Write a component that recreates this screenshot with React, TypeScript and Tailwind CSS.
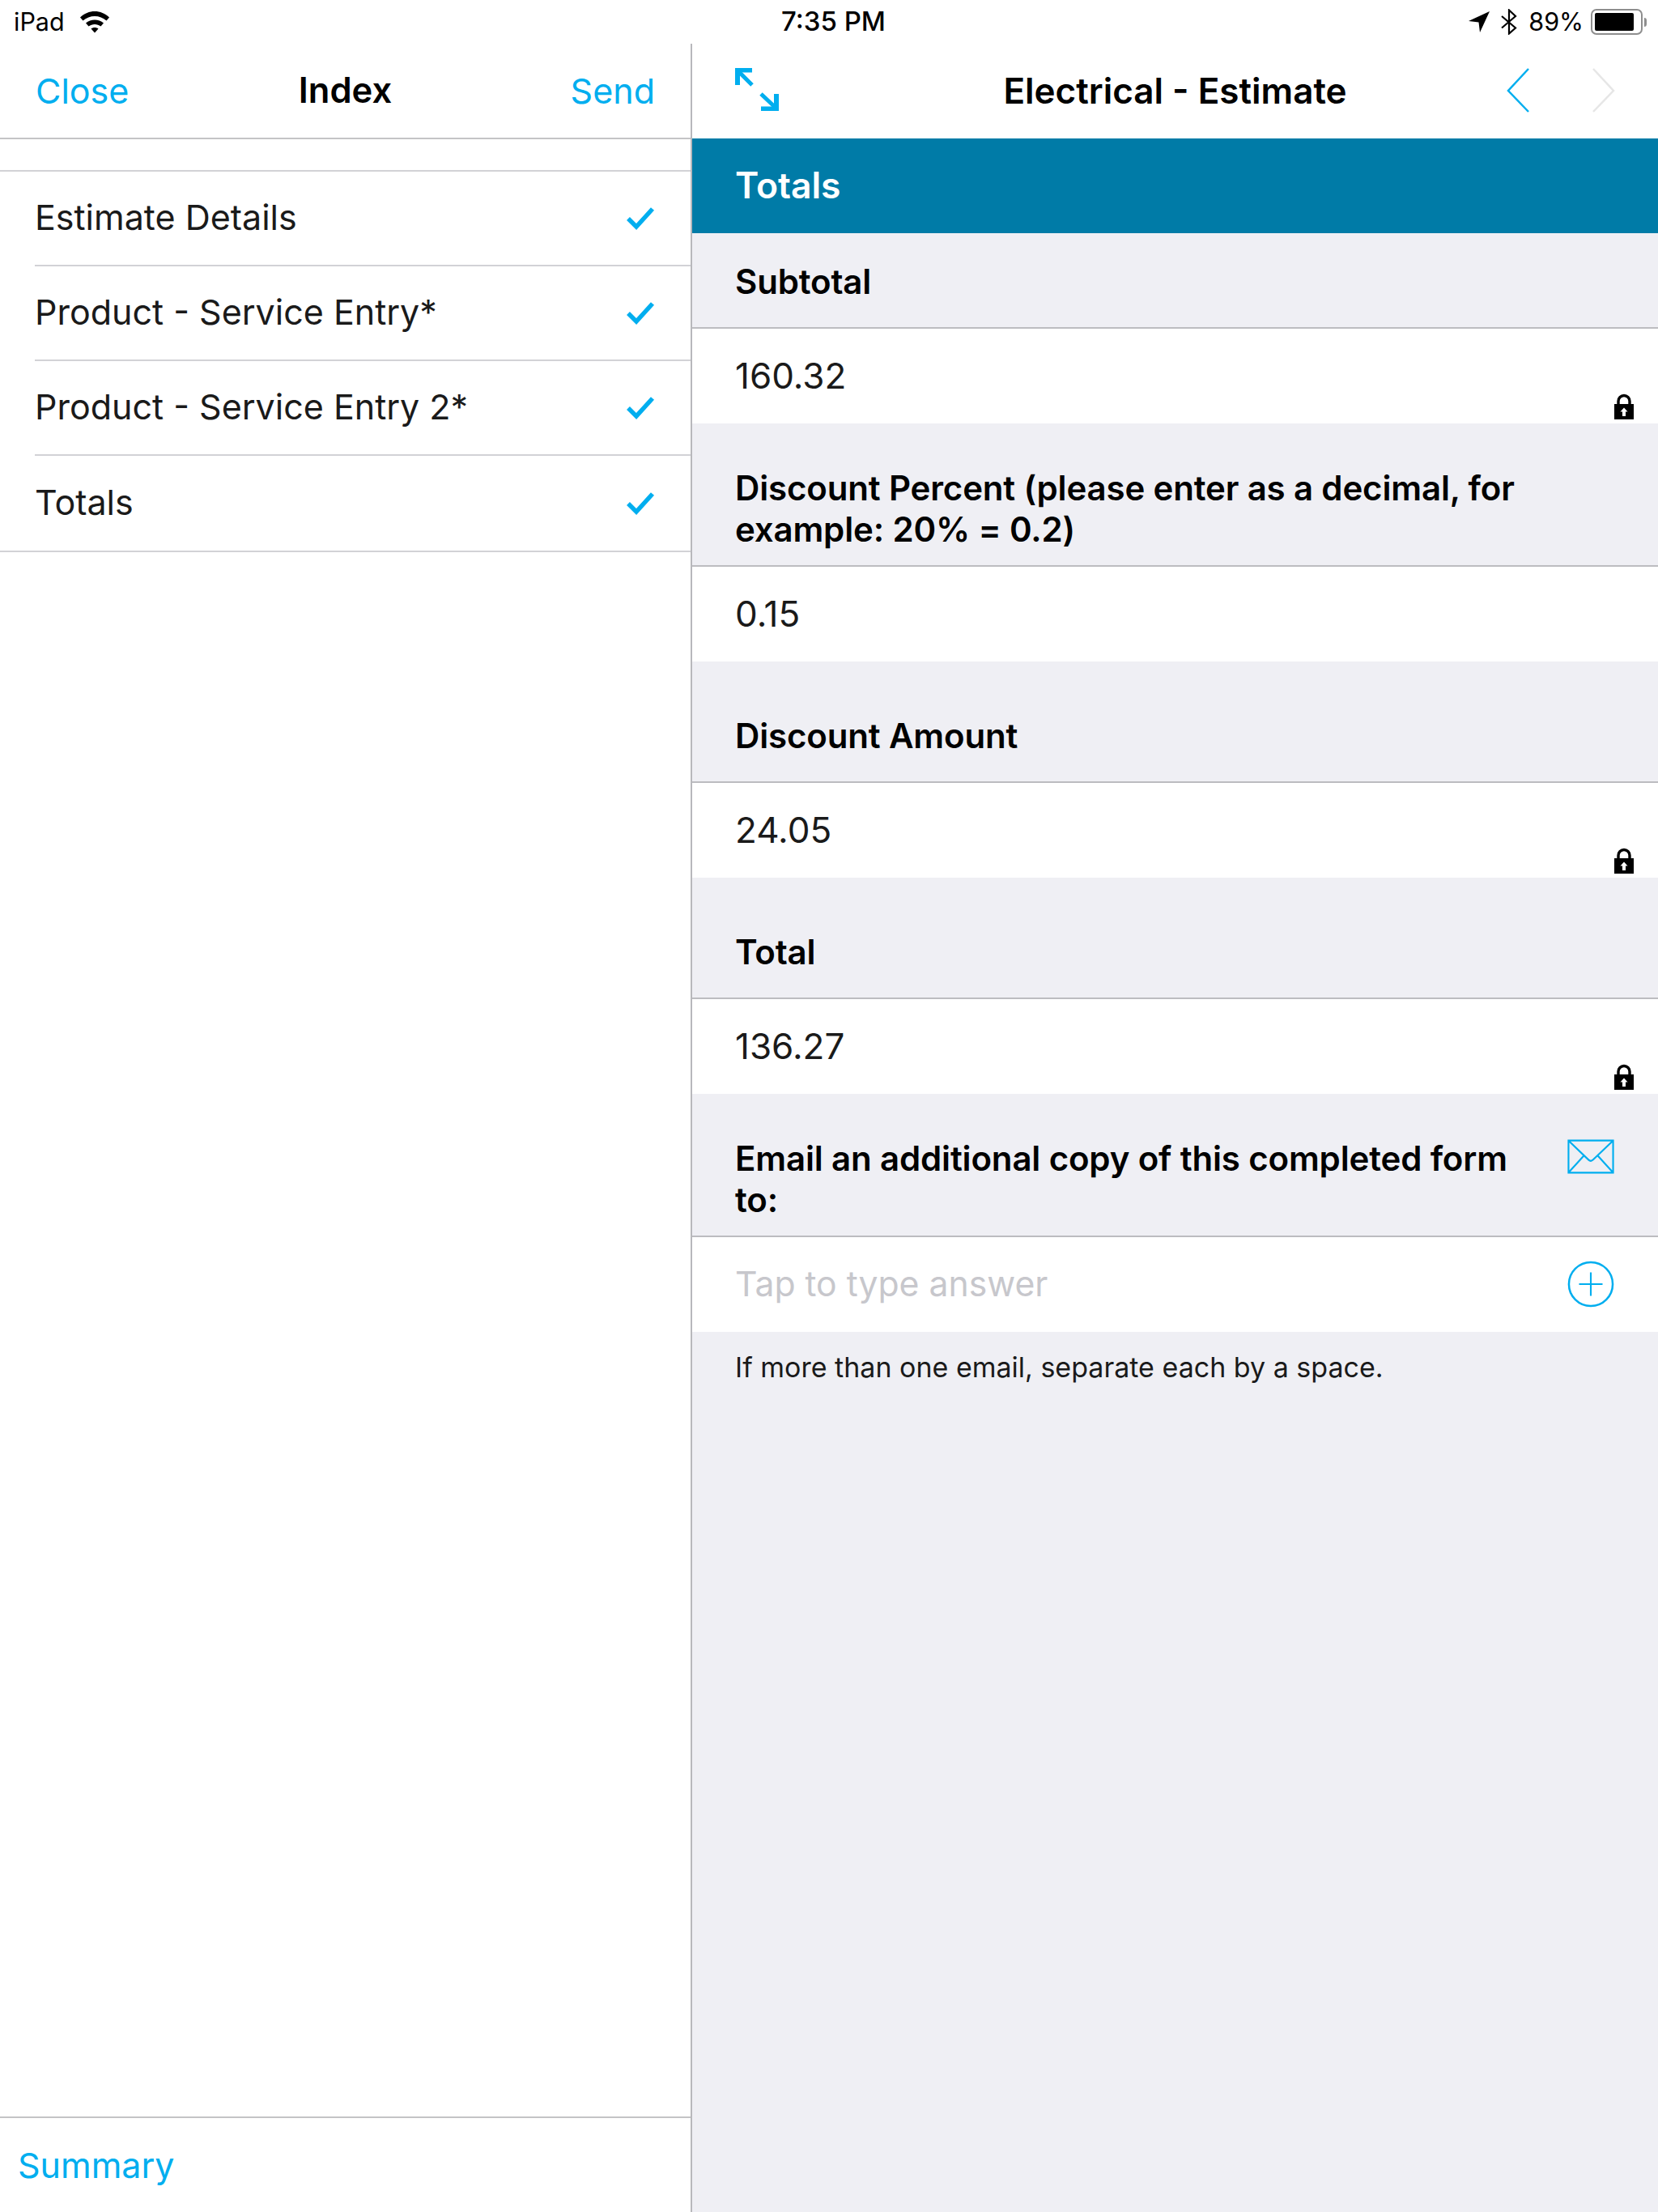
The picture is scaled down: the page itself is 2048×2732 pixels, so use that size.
const Lock = () => (
  <svg width="24" height="32" viewBox="0 0 24 32" className="absolute right-[30px] bottom-[5px]">
    <path d="M5 14V9.500a7 7 0 0 1 14 0V14" fill="none" stroke="#000" strokeWidth="3.400" />
    <path fillRule="evenodd" d="M0 13h24v19H0zM12 17.500l-4.500 5H10V28h4v-5.500h2.500z" fill="#000" />
  </svg>
);

const Check = () => (
  <svg width="36" height="30" viewBox="0 0 36 30">
    <path d="M3 16l10 10L33 4" fill="none" stroke="#00aeef" strokeWidth="5.500" />
  </svg>
);

const Label = ({ children, cls }: { children: React.ReactNode; cls: string }) => (
  <div className={`${cls} shrink-0 bg-[#efeff4] border-b-2 border-[#bcbcc0] pl-[53px] pr-[130px] flex items-center font-semibold text-[42px] tracking-[-0.15px] leading-[51px] text-black`}>
    <div>{children}</div>
  </div>
);

const Value = ({ v, lock }: { v: string; lock?: boolean }) => (
  <div className="relative h-[117px] shrink-0 bg-white pl-[53px] pb-[1px] flex items-center text-[44px] text-[#1a1a1a]">
    {v}
    {lock && <Lock />}
  </div>
);

const Row = ({ t, last }: { t: string; last?: boolean }) => (
  <div className="h-[117px] pl-[43px]">
    <div className={`h-full flex items-center justify-between pr-[44px] pb-[2px] text-[43px] text-[#1a1a1a] ${last ? "" : "border-b-2 border-[#d2d2d6]"}`}>
      <span>{t}</span>
      <Check />
    </div>
  </div>
);

export default function App() {
  return (
    <div className="w-[2048px] h-[2732px] bg-white flex flex-col overflow-hidden font-['Inter','Liberation_Sans',sans-serif]">
      <div className="h-[54px] shrink-0 relative flex items-center justify-between pl-[17px] pr-[14px] text-[30.500px] text-black">
        <div className="flex items-center gap-[18px]">
          <span>iPad</span>
          <svg width="38" height="28" viewBox="0 0 38 28">
            <path d="M1 8.500C11-1.500 27-1.500 37 8.500L33.500 12.500C25.500 5 12.500 5 4.500 12.500Z M8 15.500C14 10 24 10 30 15.500L26.500 19.500C22 16 16 16 11.500 19.500Z M14.500 22.500C17 20.500 21 20.500 23.500 22.500L19 27.500Z" fill="#000" />
          </svg>
        </div>
        <span className="absolute left-[965px] font-medium text-[33px]">7:35 PM</span>
        <div className="flex items-center">
          <svg width="28" height="28" viewBox="0 0 28 28" className="mr-[13px]">
            <path d="M1 13L27 1 15 27 13.500 14.500Z" fill="#000" />
          </svg>
          <svg width="20" height="32" viewBox="0 0 20 32" className="mr-[14px]">
            <path d="M1 9l17 14.500L10 30.500V1.500L18 9 1 23.500" fill="none" stroke="#000" strokeWidth="2.200" />
          </svg>
          <span className="mr-[9px]">89%</span>
          <div className="w-[64px] h-[32px] border-2 border-[#8e8e8e] rounded-[7px] p-[3px]">
            <div className="h-full w-[48px] bg-black rounded-[2px]" />
          </div>
          <div className="ml-[2px] w-[3px] h-[11px] bg-[#8e8e8e] rounded-r-[3px]" />
        </div>
      </div>

      <div className="flex-1 flex min-h-0">
        <div className="w-[853px] shrink-0 flex flex-col">
          <div className="h-[118px] shrink-0 border-b-2 border-[#c4c4c6] grid grid-cols-3 items-center px-[44px] text-[43px]">
            <span className="text-[#00aeef]">Close</span>
            <span className="font-semibold text-black text-[43.500px] text-center">Index</span>
            <span className="text-[#00aeef] text-right">Send</span>
          </div>
          <div className="h-[40px] shrink-0 border-b-2 border-[#d2d2d6]" />
          <Row t="Estimate Details" />
          <Row t="Product - Service Entry*" />
          <Row t="Product - Service Entry 2*" />
          <Row t="Totals" last />
          <div className="border-t-2 border-[#d2d2d6] flex-1" />
          <div className="h-[118px] shrink-0 border-t-2 border-[#c4c4c6] pl-[22px] flex items-center text-[43px] text-[#00aeef]">Summary</div>
        </div>

        <div className="w-[2px] shrink-0 bg-[#b8b8bc]" />

        <div className="flex-1 flex flex-col bg-[#efeff4] min-w-0">
          <div className="h-[117px] shrink-0 bg-white flex items-center relative pb-[2px]">
            <svg width="60" height="58" viewBox="0 0 60 58" className="absolute left-[50px] top-[28px]">
              <path d="M3 2h21v5.500H9v15.500H3Z M57 55H35v-5.500h16V34h6Z" fill="#00aeef" />
              <path d="M8 7l16 16 M52 50 35 34" fill="none" stroke="#00aeef" strokeWidth="5" />
            </svg>
            <div className="w-full text-center font-semibold text-[44px] text-black">Electrical - Estimate</div>
            <svg width="30" height="56" viewBox="0 0 30 56" className="absolute left-[1005px] top-[29px]">
              <path d="M28 2 3 29l25 26" fill="none" stroke="#00aeef" strokeWidth="2.500" />
            </svg>
            <svg width="30" height="56" viewBox="0 0 30 56" className="absolute left-[1111px] top-[29px]">
              <path d="M2 2l25 27L2 55" fill="none" stroke="#e6e6e6" strokeWidth="2.500" />
            </svg>
          </div>
          <div className="h-[117px] shrink-0 bg-[#007ba7] pl-[53px] flex items-center font-semibold text-[44.500px] text-white">Totals</div>
          <Label cls="h-[118px] pt-[2px]">Subtotal</Label>
          <Value v="160.32" lock />
          <Label cls="h-[177px] pt-[35px]">Discount Percent (please enter as a decimal, for example: 20% = 0.2)</Label>
          <Value v="0.15" />
          <Label cls="h-[150px] pt-[35px]">Discount Amount</Label>
          <Value v="24.05" lock />
          <Label cls="h-[150px] pt-[35px]">Total</Label>
          <Value v="136.27" lock />
          <div className="relative">
            <Label cls="h-[177px] pt-[35px]">Email an additional copy of this completed form to:</Label>
            <svg width="58" height="43" viewBox="0 0 60 44" className="absolute right-[54px] top-[56px]">
              <path d="M1.500 1.500h57v41h-57Z M1.500 1.500 27 26q3 3 6 0L58.500 1.500 M1.500 42.500 21 21 M58.500 42.500 39 21" fill="none" stroke="#00aeef" strokeWidth="2.200" />
            </svg>
          </div>
          <div className="relative h-[117px] shrink-0 bg-white pl-[53px] flex items-center text-[42.700px] text-[#c7c7cc]">
            Tap to type answer
            <svg width="58" height="58" viewBox="0 0 60 60" className="absolute right-[54px] top-[29px]">
              <circle cx="30" cy="30" r="28" fill="none" stroke="#00aeef" strokeWidth="2.600" />
              <path d="M30 15v30M15 30h30" stroke="#00aeef" strokeWidth="2.200" />
            </svg>
          </div>
          <div className="pl-[53px] pt-[23px] text-[34px] leading-[42px] text-[#1a1a1a]">If more than one email, separate each by a space.</div>
        </div>
      </div>
    </div>
  );
}
